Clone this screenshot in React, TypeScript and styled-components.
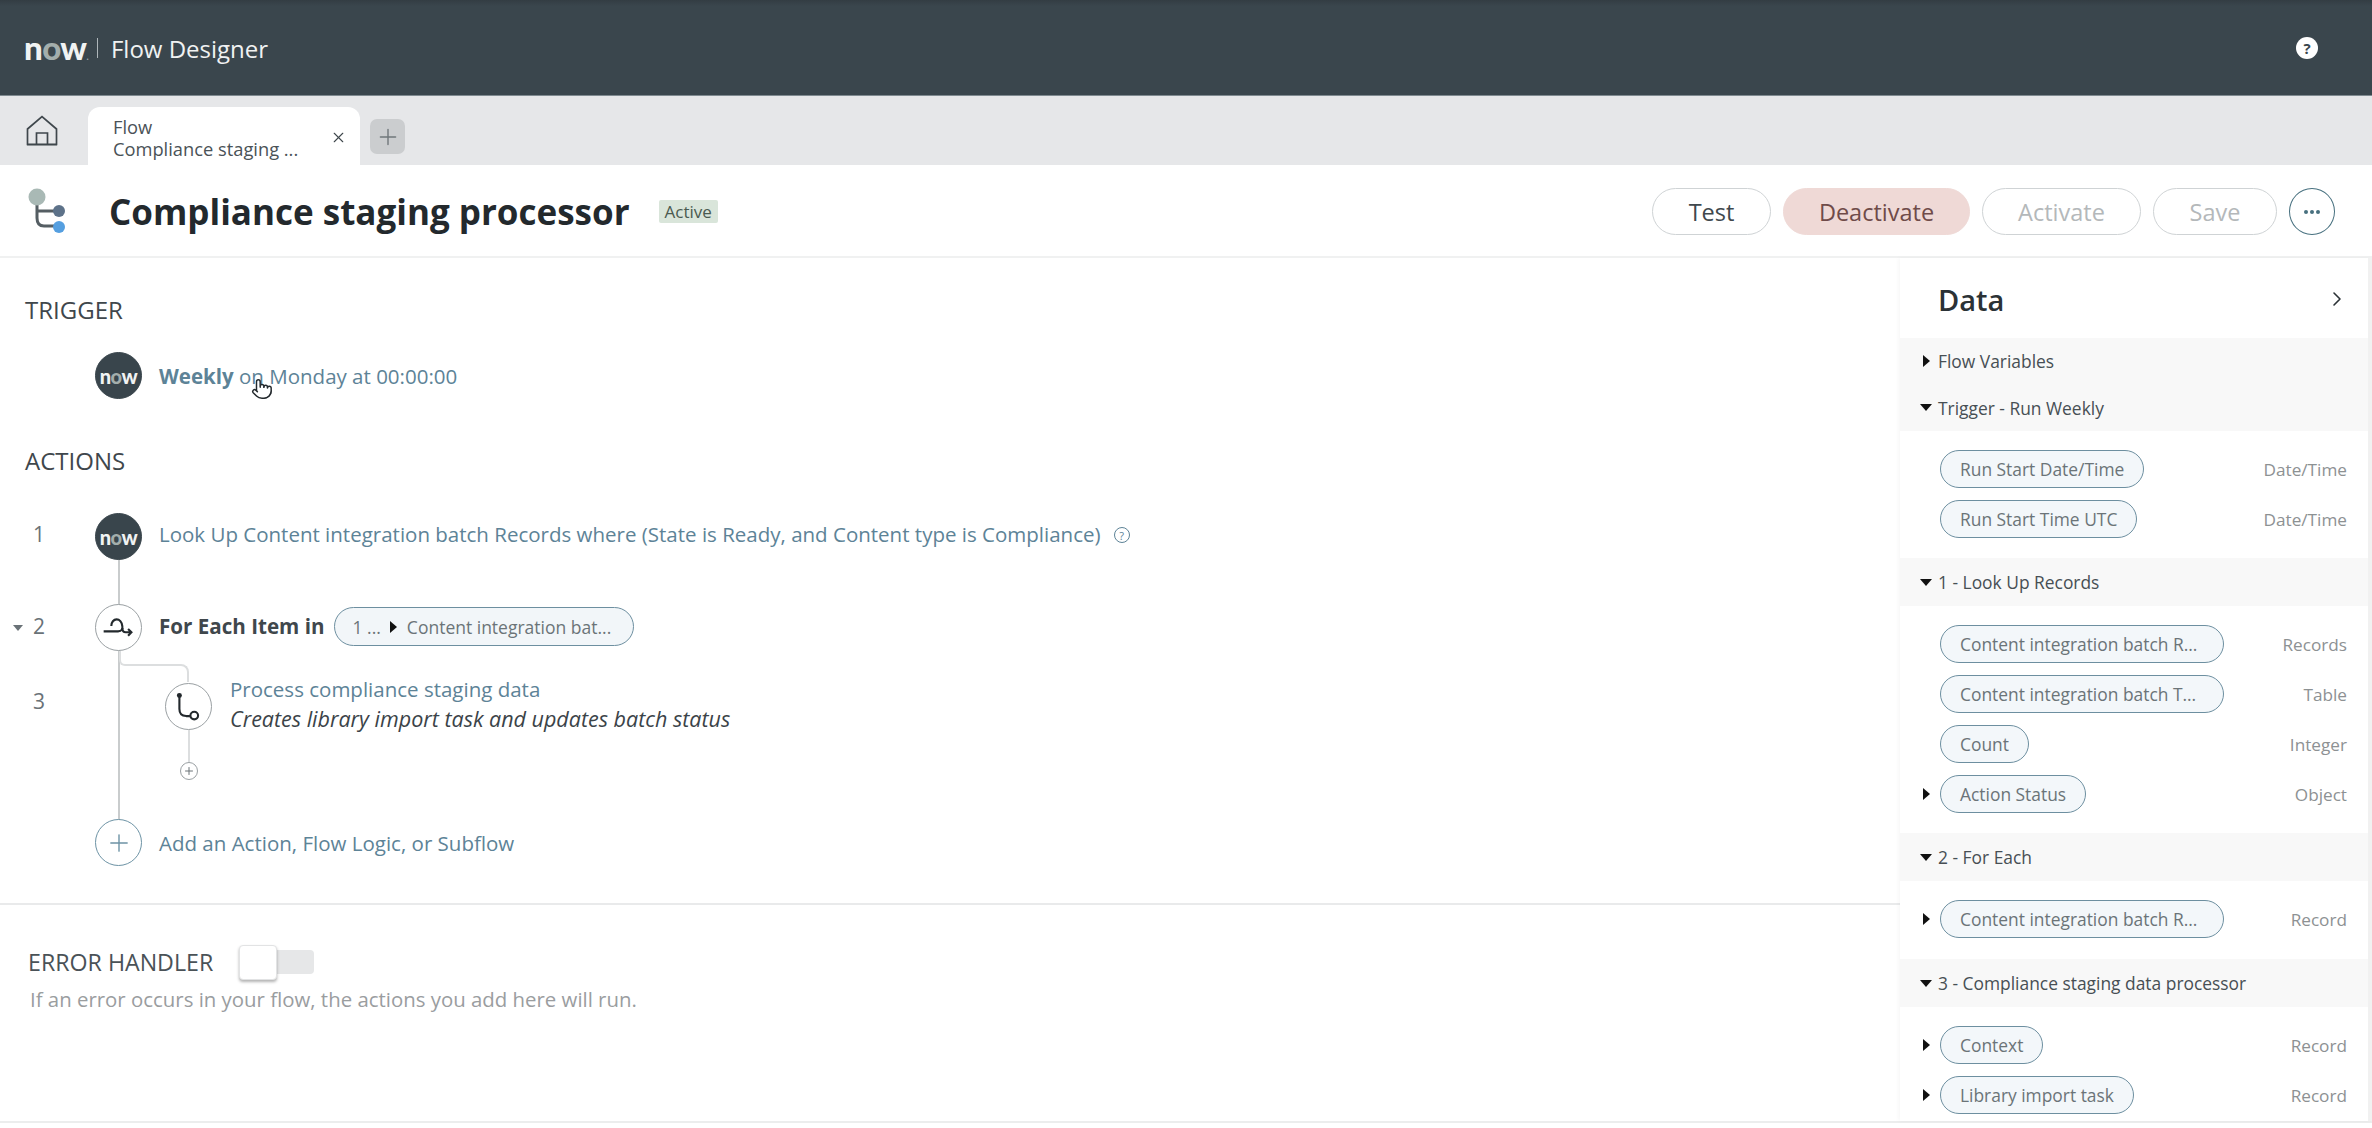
import React from "react";
import styled, { createGlobalStyle } from "styled-components";
import { ChevronRight, Pointer, X, Plus } from "lucide-react";

const GlobalStyle = createGlobalStyle`
  html, body { margin: 0; padding: 0; background: #fff; }
  body { font-family: "Open Sans", "Noto Sans", sans-serif; color: #3b4348; }
  * { box-sizing: border-box; }
`;

const Page = styled.div`
  width: 2372px;
  height: 1128px;
  display: flex;
  flex-direction: column;
  overflow: hidden;
`;

const TopBar = styled.header`
  height: 96px;
  flex: none;
  display: flex;
  align-items: center;
  padding: 0 54px 0 24px;
  background: linear-gradient(#333d43 0, #3a464d 6px, #3a464d 100%);
  border-bottom: 1px solid #7f8a90;
`;

const Logo = styled.span<{ $small?: boolean }>`
  font-family: "Lato", sans-serif;
  font-weight: 900;
  font-size: ${(p) => (p.$small ? 20 : 33)}px;
  line-height: 1;
  letter-spacing: ${(p) => (p.$small ? -0.4 : -0.6)}px;
  color: #f1f3f3;
  span { color: #a3aeac; }
  small { font-size: 9px; color: #9aa4a8; }
`;

const BarDivider = styled.span`
  width: 1px;
  height: 20px;
  margin: 0 13px 0 9px;
  background: #aeb6ba;
`;

const AppName = styled.span`
  font-size: 24px;
  color: #f0f2f2;
  flex: 1;
  position: relative;
  top: 1px;
`;

const HelpDot = styled.span`
  width: 22px;
  height: 22px;
  border-radius: 50%;
  background: #fff;
  color: #39454c;
  font-size: 15px;
  font-weight: 700;
  display: flex;
  align-items: center;
  justify-content: center;
`;

const TabBar = styled.nav`
  height: 69px;
  flex: none;
  display: flex;
  align-items: flex-end;
  background: #e6e7e9;
`;

const HomeSlot = styled.div`
  width: 88px;
  height: 69px;
  padding-left: 26px;
  display: flex;
  align-items: center;
  color: #3f474c;
`;

const Tab = styled.div`
  width: 272px;
  height: 58px;
  position: relative;
  background: #fff;
  border-radius: 12px 12px 0 0;
  padding: 9px 0 0 25px;
  font-size: 18.3px;
  line-height: 22px;
  color: #4a5257;
`;

const TabClose = styled.span`
  position: absolute;
  right: 13px;
  top: 22px;
  display: flex;
  color: #3f474c;
`;

const AddTab = styled.button`
  width: 35px;
  height: 35px;
  margin: 0 0 11px 10px;
  border: 0;
  padding: 0;
  border-radius: 7px;
  background: #cbcdcf;
  color: #70777b;
  display: flex;
  align-items: center;
  justify-content: center;
`;

const TitleRow = styled.div`
  height: 93px;
  flex: none;
  display: flex;
  align-items: center;
  padding: 2px 37px 0 28px;
  border-bottom: 2px solid #f0f1f1;
`;

const Title = styled.h1`
  margin: 0 0 0 39px;
  font-size: 35px;
  font-weight: 700;
  color: #23292d;
  line-height: 46px;
`;

const Badge = styled.span`
  margin-left: 29px;
  height: 23px;
  padding: 0 6px;
  background: #d9e5da;
  border-radius: 2px;
  font-size: 17px;
  line-height: 23px;
  color: #4a5a50;
`;

const Actions = styled.div`
  margin-left: auto;
  display: flex;
  gap: 12px;
`;

const ActionButton = styled.button<{ $tone?: "danger" | "muted"; $width: number }>`
  height: 47px;
  width: ${(p) => p.$width}px;
  padding: 0;
  border-radius: 24px;
  font-family: inherit;
  font-size: 23.5px;
  background: ${(p) => (p.$tone === "danger" ? "#efd9d6" : "#fff")};
  color: ${(p) => (p.$tone === "danger" ? "#6f4b49" : p.$tone === "muted" ? "#b4b8ba" : "#40484d")};
  border: 1.5px solid ${(p) => (p.$tone === "danger" ? "#efd9d6" : "#cfd3d5")};
`;

const MoreButton = styled.button`
  width: 46px;
  height: 47px;
  padding: 0;
  border-radius: 50%;
  border: 1.5px solid #47707f;
  background: #fff;
  color: #47707f;
  display: flex;
  align-items: center;
  justify-content: center;
  gap: 2px;
  i { width: 4px; height: 4px; border-radius: 50%; background: currentColor; }
`;

const Main = styled.div`
  height: 865px;
  flex: none;
  display: flex;
  border-bottom: 2px solid #eceded;
`;

const Flow = styled.section`
  width: 1900px;
  flex: none;
`;

const FlowTop = styled.div`
  height: 647px;
  padding: 37px 0 0 0;
  border-bottom: 2px solid #e9eaeb;
`;

const SectionLabel = styled.h2<{ $top?: number }>`
  margin: ${(p) => p.$top ?? 0}px 0 0 25px;
  font-size: 24px;
  line-height: 30px;
  font-weight: 400;
  color: #3f474c;
`;

const Step = styled.div<{ $top: number }>`
  display: flex;
  align-items: center;
  height: 47px;
  margin-top: ${(p) => p.$top}px;
  position: relative;
  z-index: 1;
`;

const StepNumber = styled.span<{ $lift?: number }>`
  width: 95px;
  flex: none;
  padding-left: 33px;
  font-size: 21px;
  color: #6a7277;
  position: relative;
  top: ${(p) => -(p.$lift ?? 0)}px;
`;

const RowCaret = styled.i`
  position: absolute;
  left: 13px;
  top: 13px;
  border-left: 5px solid transparent;
  border-right: 5px solid transparent;
  border-top: 6px solid #6a7277;
`;

const Node = styled.span<{ $dark?: boolean; $accent?: boolean }>`
  width: 47px;
  height: 47px;
  flex: none;
  border-radius: 50%;
  display: flex;
  align-items: center;
  justify-content: center;
  background: ${(p) => (p.$dark ? "#39454c" : "#fff")};
  color: ${(p) => (p.$accent ? "#6d93a5" : "#23292d")};
  border: 1.5px solid ${(p) => (p.$dark ? "#39454c" : p.$accent ? "#6d93a5" : "#9aa0a3")};
`;

const StepText = styled.span<{ $lift?: number }>`
  margin-left: 17px;
  font-size: 20.5px;
  color: #5d8397;
  position: relative;
  top: ${(p) => -(p.$lift ?? 0)}px;
  white-space: nowrap;
  b { font-weight: 700; }
`;

const Strong = styled.span`
  margin-left: 17px;
  font-size: 20.6px;
  font-weight: 700;
  color: #3f474c;
  position: relative;
  top: -2px;
`;

const Cursor = styled.span`
  position: absolute;
  left: 92px;
  top: 16px;
  display: flex;
  color: #23292d;
`;

const InfoMark = styled.span`
  display: inline-flex;
  width: 16px;
  height: 16px;
  margin-left: 13px;
  border-radius: 50%;
  border: 1.5px solid #5d8397;
  font-size: 11px;
  line-height: 1;
  align-items: center;
  justify-content: center;
  vertical-align: 2px;
`;

const Track = styled.div`
  position: relative;
  margin-top: 37px;
  &::before {
    content: "";
    position: absolute;
    left: 118px;
    top: 20px;
    bottom: 20px;
    width: 2px;
    background: #c9cccd;
  }
`;

const Branch = styled.i`
  position: absolute;
  left: 127px;
  top: 151px;
  width: 62px;
  height: 18px;
  border: 2px solid #dcdedf;
  border-left: 0;
  border-bottom: 0;
  border-radius: 0 8px 0 0;
`;

const BranchElbow = styled.i`
  position: absolute;
  left: 119px;
  top: 138px;
  width: 8px;
  height: 15px;
  border-left: 2px solid #dcdedf;
  border-bottom: 2px solid #dcdedf;
  border-radius: 0 0 0 6px;
`;

const SubStep = styled.div`
  display: flex;
  height: 47px;
  margin-top: 32px;
  position: relative;
  z-index: 1;
`;

const SubNumber = styled(StepNumber)`
  width: 165px;
  padding-top: 4px;
`;

const SubBody = styled.div`
  margin: -8px 0 0 18px;
  font-size: 20.5px;
  line-height: 29px;
  color: #5d8397;
  em { display: block; font-size: 21.5px; color: #3b4348; white-space: nowrap; }
`;

const MiniPlus = styled.span`
  width: 18px;
  height: 18px;
  margin: 32px 0 0 180px;
  display: flex;
  align-items: center;
  justify-content: center;
  border-radius: 50%;
  border: 1.5px solid #9aa0a3;
  color: #6a7277;
  background: #fff;
  position: relative;
  z-index: 1;
  &::before {
    content: "";
    position: absolute;
    left: 7px;
    top: -33px;
    width: 2px;
    height: 32px;
    background: #dcdedf;
  }
`;

const InlinePill = styled.span`
  margin-left: 9px;
  width: 300px;
  height: 39px;
  display: flex;
  align-items: center;
  padding-left: 18px;
  gap: 7px;
  border-radius: 20px;
  border: 1.5px solid #6d8fa0;
  background: #f2f6f9;
  font-size: 17.5px;
  color: #6b7478;
  white-space: nowrap;
  position: relative;
  top: -1px;
`;

const ErrorBlock = styled.div`
  padding: 39px 0 0 28px;
`;

const ErrorHead = styled.div`
  display: flex;
  align-items: center;
  height: 36px;
  font-size: 23.2px;
  color: #4a5257;
`;

const Toggle = styled.span`
  margin-left: 26px;
  width: 75px;
  height: 34px;
  display: flex;
  align-items: center;
  position: relative;
  &::before {
    content: "";
    position: absolute;
    right: 0;
    left: 30px;
    top: 5px;
    bottom: 5px;
    background: #e6e7e8;
    border-radius: 4px;
  }
  &::after {
    content: "";
    position: absolute;
    left: 0;
    top: 0;
    width: 36px;
    height: 33px;
    background: #fff;
    border-radius: 4px;
    border: 1px solid #e2e3e4;
    box-shadow: 0 2px 3px rgba(0, 0, 0, 0.3);
  }
`;

const ErrorHint = styled.p`
  margin: 6px 0 0 2px;
  font-size: 20.4px;
  line-height: 26px;
  color: #9a9d9f;
`;

const DataPanel = styled.aside`
  flex: 1;
  border-right: 4px solid #f1f1f1;
  box-shadow: -2px 0 4px rgba(0, 0, 0, 0.03);
  overflow: hidden;
`;

const DataHead = styled.div`
  height: 80px;
  display: flex;
  align-items: center;
  justify-content: space-between;
  padding: 2px 19px 0 38px;
  font-size: 29px;
  font-weight: 600;
  color: #2b3236;
`;

const GroupHead = styled.div<{ $tall?: number }>`
  height: ${(p) => p.$tall ?? 47}px;
  display: flex;
  align-items: center;
  gap: 6px;
  padding-left: 20px;
  background: #f8f8f8;
  font-size: 17.4px;
  color: #474f54;
`;

const Caret = styled.i<{ $open?: boolean; $hidden?: boolean }>`
  width: 12px;
  flex: none;
  display: flex;
  justify-content: center;
  visibility: ${(p) => (p.$hidden ? "hidden" : "visible")};
  &::before {
    content: "";
    ${(p) =>
      p.$open
        ? "border-left: 6px solid transparent; border-right: 6px solid transparent; border-top: 7px solid #111;"
        : "border-top: 6px solid transparent; border-bottom: 6px solid transparent; border-left: 7px solid #111;"}
  }
`;

const GroupBody = styled.div<{ $height: number }>`
  height: ${(p) => p.$height}px;
  padding-top: 19px;
  display: flex;
  flex-direction: column;
  gap: 12px;
`;

const Variable = styled.div`
  display: flex;
  align-items: center;
  height: 38px;
  padding: 0 21px 0 20px;
  justify-content: space-between;
  font-size: 17.2px;
  color: #8d9193;
`;

const VariableLeft = styled.div`
  display: flex;
  align-items: center;
  gap: 8px;
`;

const Pill = styled.span<{ $width?: number }>`
  height: 38px;
  display: flex;
  align-items: center;
  padding: 0 19px;
  width: ${(p) => (p.$width ? `${p.$width}px` : "auto")};
  border-radius: 19px;
  border: 1.5px solid #6d8fa0;
  background: #f3f7fa;
  color: #6b7478;
  font-size: 17.4px;
  white-space: nowrap;
`;

const NowMark = () => (
  <Logo $small>
    n<span>o</span>w
  </Logo>
);

const HomeIcon = () => (
  <svg width="32" height="31" viewBox="0 0 32 31" fill="none" stroke="currentColor" strokeWidth="1.7">
    <path d="M1.5 14 16 1.5 30.5 14V29.5H1.5Z" />
    <path d="M10.5 29.5V18H21.5V29.5" />
    <path d="M1 29.5H31" />
  </svg>
);

const FlowIcon = () => (
  <svg width="42" height="48" viewBox="0 0 42 48" fill="none">
    <path d="M9 12V30Q9 38 16 38H30M9 23H30" stroke="#555e63" strokeWidth="3" />
    <circle cx="9" cy="9" r="8.5" fill="#a9b9b5" />
    <circle cx="31" cy="23" r="6" fill="#5d7289" />
    <circle cx="31" cy="39" r="6" fill="#559fe0" />
  </svg>
);

const LoopIcon = () => (
  <svg width="47" height="47" viewBox="0 0 47 47" fill="none" stroke="currentColor" strokeWidth="2.2">
    <path d="M8 27.5H23C27 27.5 28 25 27.5 22C27 18 24.5 15 21.5 15C18.5 15 16 18 16 22" />
    <path d="M27.5 24Q27.5 28.5 31 28.5H37M33.5 25L37 28.5L33.5 32" />
  </svg>
);

const BranchIcon = () => (
  <svg width="47" height="47" viewBox="0 0 47 47" fill="none" stroke="currentColor" strokeWidth="2.2">
    <circle cx="14" cy="12" r="2.6" fill="currentColor" stroke="none" />
    <path d="M14 12V26Q14 33 21 33.5H25" />
    <circle cx="29.5" cy="33" r="4" />
  </svg>
);

const App = () => {
  return (
    <Page>
      <GlobalStyle />
      <TopBar>
        <Logo>
          n<span>o</span>w<small>.</small>
        </Logo>
        <BarDivider />
        <AppName>Flow Designer</AppName>
        <HelpDot>?</HelpDot>
      </TopBar>

      <TabBar>
        <HomeSlot>
          <HomeIcon />
        </HomeSlot>
        <Tab>
          Flow
          <br />
          Compliance staging ...
          <TabClose>
            <X size={17} strokeWidth={1.6} />
          </TabClose>
        </Tab>
        <AddTab>
          <Plus size={26} strokeWidth={1.3} />
        </AddTab>
      </TabBar>

      <TitleRow>
        <FlowIcon />
        <Title>Compliance staging processor</Title>
        <Badge>Active</Badge>
        <Actions>
          <ActionButton $width={119}>Test</ActionButton>
          <ActionButton $width={187} $tone="danger">
            Deactivate
          </ActionButton>
          <ActionButton $width={159} $tone="muted">
            Activate
          </ActionButton>
          <ActionButton $width={124} $tone="muted">
            Save
          </ActionButton>
          <MoreButton>
            <i />
            <i />
            <i />
          </MoreButton>
        </Actions>
      </TitleRow>

      <Main>
        <Flow>
          <FlowTop>
            <SectionLabel>TRIGGER</SectionLabel>
            <Step $top={27}>
              <StepNumber />
              <Node $dark>
                <NowMark />
              </Node>
              <StepText>
                <b>Weekly</b> on Monday at 00:00:00
                <Cursor>
                  <Pointer size={22} strokeWidth={1.6} fill="#fff" />
                </Cursor>
              </StepText>
            </Step>

            <SectionLabel $top={47}>ACTIONS</SectionLabel>
            <Track>
              <Step $top={0}>
                <StepNumber $lift={3}>1</StepNumber>
                <Node $dark>
                  <NowMark />
                </Node>
                <StepText $lift={3}>
                  Look Up Content integration batch Records where (State is Ready, and Content type is Compliance)
                  <InfoMark>?</InfoMark>
                </StepText>
              </Step>
              <Step $top={44}>
                <StepNumber $lift={2}>
                  <RowCaret />2
                </StepNumber>
                <Node>
                  <LoopIcon />
                </Node>
                <Strong>For Each Item in</Strong>
                <InlinePill>
                  1 ...
                  <Caret />
                  Content integration bat...
                </InlinePill>
              </Step>
              <BranchElbow />
              <Branch />
              <SubStep>
                <SubNumber>3</SubNumber>
                <Node>
                  <BranchIcon />
                </Node>
                <SubBody>
                  Process compliance staging data
                  <em>Creates library import task and updates batch status</em>
                </SubBody>
              </SubStep>
              <MiniPlus>
                <Plus size={12} strokeWidth={2} />
              </MiniPlus>
              <Step $top={39}>
                <StepNumber />
                <Node $accent>
                  <Plus size={28} strokeWidth={1.2} />
                </Node>
                <StepText>Add an Action, Flow Logic, or Subflow</StepText>
              </Step>
            </Track>
          </FlowTop>
          <ErrorBlock>
            <ErrorHead>
              ERROR HANDLER
              <Toggle />
            </ErrorHead>
            <ErrorHint>If an error occurs in your flow, the actions you add here will run.</ErrorHint>
          </ErrorBlock>
        </Flow>

        <DataPanel>
          <DataHead>
            Data
            <ChevronRight size={24} strokeWidth={1.6} />
          </DataHead>

          <GroupHead $tall={46}>
            <Caret />
            Flow Variables
          </GroupHead>
          <GroupHead>
            <Caret $open />
            Trigger - Run Weekly
          </GroupHead>
          <GroupBody $height={127}>
            <Variable>
              <VariableLeft>
                <Caret $hidden />
                <Pill>Run Start Date/Time</Pill>
              </VariableLeft>
              Date/Time
            </Variable>
            <Variable>
              <VariableLeft>
                <Caret $hidden />
                <Pill>Run Start Time UTC</Pill>
              </VariableLeft>
              Date/Time
            </Variable>
          </GroupBody>

          <GroupHead $tall={48}>
            <Caret $open />1 - Look Up Records
          </GroupHead>
          <GroupBody $height={227}>
            <Variable>
              <VariableLeft>
                <Caret $hidden />
                <Pill $width={284}>Content integration batch R...</Pill>
              </VariableLeft>
              Records
            </Variable>
            <Variable>
              <VariableLeft>
                <Caret $hidden />
                <Pill $width={284}>Content integration batch T...</Pill>
              </VariableLeft>
              Table
            </Variable>
            <Variable>
              <VariableLeft>
                <Caret $hidden />
                <Pill>Count</Pill>
              </VariableLeft>
              Integer
            </Variable>
            <Variable>
              <VariableLeft>
                <Caret />
                <Pill>Action Status</Pill>
              </VariableLeft>
              Object
            </Variable>
          </GroupBody>

          <GroupHead $tall={48}>
            <Caret $open />2 - For Each
          </GroupHead>
          <GroupBody $height={78}>
            <Variable>
              <VariableLeft>
                <Caret />
                <Pill $width={284}>Content integration batch R...</Pill>
              </VariableLeft>
              Record
            </Variable>
          </GroupBody>

          <GroupHead $tall={48}>
            <Caret $open />3 - Compliance staging data processor
          </GroupHead>
          <GroupBody $height={116}>
            <Variable>
              <VariableLeft>
                <Caret />
                <Pill>Context</Pill>
              </VariableLeft>
              Record
            </Variable>
            <Variable>
              <VariableLeft>
                <Caret />
                <Pill>Library import task</Pill>
              </VariableLeft>
              Record
            </Variable>
          </GroupBody>
        </DataPanel>
      </Main>
    </Page>
  );
};

export default App;
